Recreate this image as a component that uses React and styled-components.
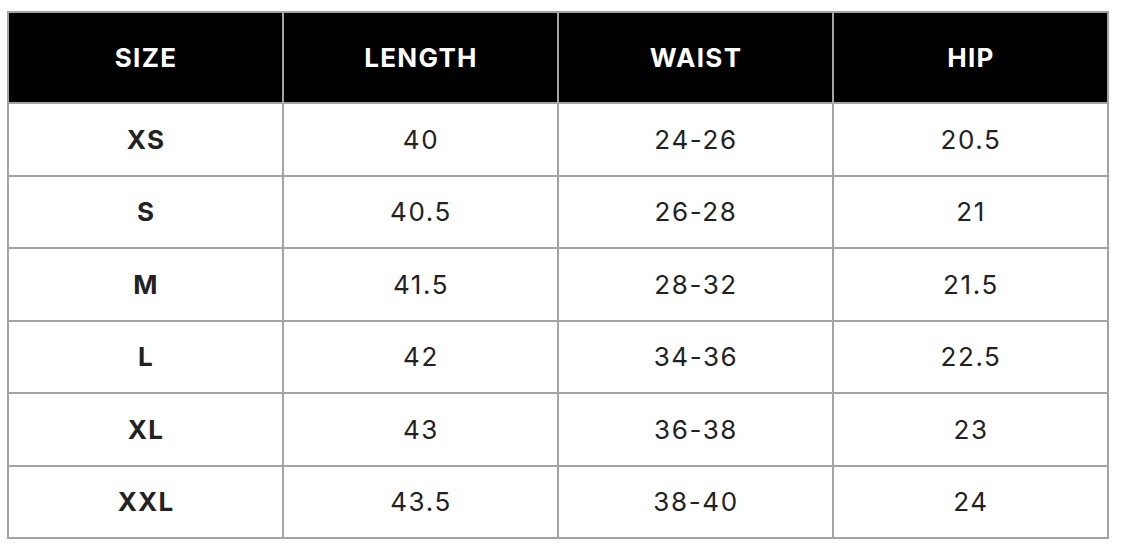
import React from "react";
import styled, { createGlobalStyle } from "styled-components";

const GlobalStyle = createGlobalStyle`
    html, body {
        margin: 0;
        padding: 0;
        background: #ffffff;
    }
    body {
        font-family: Inter, "Noto Sans", sans-serif;
        color: #1f1f1f;
    }
`;

const columns = ["SIZE", "LENGTH", "WAIST", "HIP"];

const sizeRows = [
    { size: "XS", length: "40", waist: "24-26", hip: "20.5" },
    { size: "S", length: "40.5", waist: "26-28", hip: "21" },
    { size: "M", length: "41.5", waist: "28-32", hip: "21.5" },
    { size: "L", length: "42", waist: "34-36", hip: "22.5" },
    { size: "XL", length: "43", waist: "36-38", hip: "23" },
    { size: "XXL", length: "43.5", waist: "38-40", hip: "24" },
];

const Page = styled.div`
    padding: 11px 12px 0 7px;
`;

const Table = styled.table`
    width: 1102px;
    border-collapse: collapse;
    table-layout: fixed;
    border: 2px solid #a4a4a4;
`;

const HeadCell = styled.th`
    height: 89px;
    padding: 0 0 0 1px;
    background: #000000;
    color: #ffffff;
    font-size: 26px;
    font-weight: 700;
    letter-spacing: 1.3px;
    text-align: center;
    border: 2px solid #a4a4a4;
`;

const Cell = styled.td`
    height: 70.5px;
    padding: 0 0 0 1px;
    font-size: 26px;
    font-weight: ${(p) => (p.$bold ? 700 : 400)};
    letter-spacing: ${(p) => (p.$bold ? "1.2px" : "1.6px")};
    color: #222222;
    text-align: center;
    border: 2px solid #a4a4a4;
`;

const App = () => {
    return (
        <Page>
            <GlobalStyle />
            <Table>
                <thead>
                    <tr>
                        {columns.map((col) => (
                            <HeadCell key={col}>{col}</HeadCell>
                        ))}
                    </tr>
                </thead>
                <tbody>
                    {sizeRows.map((row) => (
                        <tr key={row.size}>
                            <Cell $bold>{row.size}</Cell>
                            <Cell>{row.length}</Cell>
                            <Cell>{row.waist}</Cell>
                            <Cell>{row.hip}</Cell>
                        </tr>
                    ))}
                </tbody>
            </Table>
        </Page>
    );
};

export default App;
